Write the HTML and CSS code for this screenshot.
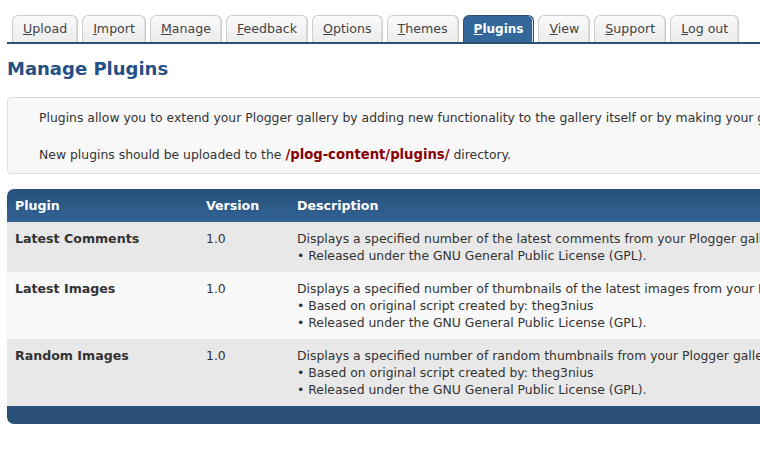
FILE: index.html
```html
<!DOCTYPE html>
<html lang="en">
<head>
    <meta charset="UTF-8">
    <title>Plogger Admin - Plugins</title>
    <link rel="stylesheet" href="styles.css">
</head>
<body>

    <!-- Admin navigation tabs -->
    <ul class="tabs">
        <li><a href="#"><u>U</u>pload</a></li>
        <li><a href="#"><u>I</u>mport</a></li>
        <li><a href="#"><u>M</u>anage</a></li>
        <li><a href="#"><u>F</u>eedback</a></li>
        <li><a href="#"><u>O</u>ptions</a></li>
        <li><a href="#"><u>T</u>hemes</a></li>
        <li class="active"><a href="#"><u>P</u>lugins</a></li>
        <li><a href="#"><u>V</u>iew</a></li>
        <li><a href="#"><u>S</u>upport</a></li>
        <li><a href="#"><u>L</u>og out</a></li>
    </ul>

    <h1 class="page-title">Manage Plugins</h1>

    <div class="info-box">
        <p>Plugins allow you to extend your Plogger gallery by adding new functionality to the gallery itself or by making your gallery work with other software.</p>
        <p>New plugins should be uploaded to the <strong class="path">/plog-content/plugins/</strong> directory.</p>
    </div>

    <table class="plugin-table">
        <thead>
            <tr>
                <th class="col-name">Plugin</th>
                <th class="col-version">Version</th>
                <th>Description</th>
            </tr>
        </thead>
        <tbody>
            <tr class="alt">
                <td class="name">Latest Comments</td>
                <td>1.0</td>
                <td>Displays a specified number of the latest comments from your Plogger gallery.<br>&bull; Released under the GNU General Public License (GPL).</td>
            </tr>
            <tr>
                <td class="name">Latest Images</td>
                <td>1.0</td>
                <td>Displays a specified number of thumbnails of the latest images from your Plogger gallery.<br>&bull; Based on original script created by: theg3nius<br>&bull; Released under the GNU General Public License (GPL).</td>
            </tr>
            <tr class="alt">
                <td class="name">Random Images</td>
                <td>1.0</td>
                <td>Displays a specified number of random thumbnails from your Plogger gallery.<br>&bull; Based on original script created by: theg3nius<br>&bull; Released under the GNU General Public License (GPL).</td>
            </tr>
        </tbody>
        <tfoot>
            <tr>
                <td colspan="3"></td>
            </tr>
        </tfoot>
    </table>

</body>
</html>
```

FILE: styles.css
```css
body {
    margin: 0;
    padding: 15px 0 0 7px;
    font-family: 'DejaVu Sans', Verdana, sans-serif;
    font-size: 12.4px;
    color: #333333;
    background-color: #ffffff;
    width: 900px;
}
/* Tabs */
.tabs {
    list-style: none;
    margin: 0;
    padding: 0 0 0 5px;
    display: flex;
    gap: 4px;
    border-bottom: 2px solid #2a5078;
    height: 27px;
    font-size: 12.6px;
}
.tabs li {
    height: 27px;
    box-sizing: border-box;
    border: 1px solid #cccccc;
    border-bottom: none;
    border-radius: 6px 6px 0 0;
    background: linear-gradient(#fafafa, #ececec);
    box-shadow: inset -1px 0 0 #dddddd;
}
.tabs li a {
    display: block;
    padding: 3px 10px 0 10px;
    color: #444444;
    text-decoration: none;
    line-height: 20px;
}
.tabs li.active {
    background: #336699;
    border-color: #2a5078;
}
.tabs li.active a {
    color: #ffffff;
    font-weight: bold;
    font-size: 12px;
}
.page-title {
    margin: 14px 0 0 0;
    font-size: 18px;
    line-height: 22px;
    color: #245083;
    font-weight: bold;
}
/* Intro box */
.info-box {
    margin-top: 17px;
    padding: 5px 31px 4px 31px;
    border: 1px solid #dddddd;
    border-radius: 4px;
    background-color: #f8f8f8;
    white-space: nowrap;
    overflow: hidden;
}
.info-box p {
    margin: 6px 0 19px 0;
    line-height: 18px;
}
.info-box p + p {
    margin-bottom: 5px;
}
.path {
    color: #880000;
    font-size: 13.2px;
}
/* Plugin list */
.plugin-table {
    margin-top: 15px;
    width: 100%;
    border-collapse: separate;
    border-spacing: 0;
    white-space: nowrap;
}
.plugin-table th {
    text-align: left;
    color: #ffffff;
    height: 33px;
    padding: 0 8px;
    font-size: 12.6px;
    background: linear-gradient(#27507a, #326395);
}
.plugin-table th:first-child {
    border-top-left-radius: 7px;
}
.plugin-table .col-name {
    width: 175px;
}
.plugin-table .col-version {
    width: 75px;
}
.plugin-table td {
    vertical-align: top;
    padding: 8px 8px 8px 8px;
    line-height: 17px;
    background-color: #f8f8f8;
}
.plugin-table tr.alt td {
    background-color: #e8e8e8;
}
.plugin-table td.name {
    font-weight: bold;
    font-size: 12.6px;
}
.plugin-table tfoot td {
    background-color: #285078;
    height: 18px;
    padding: 0;
    border-bottom-left-radius: 7px;
}
```
